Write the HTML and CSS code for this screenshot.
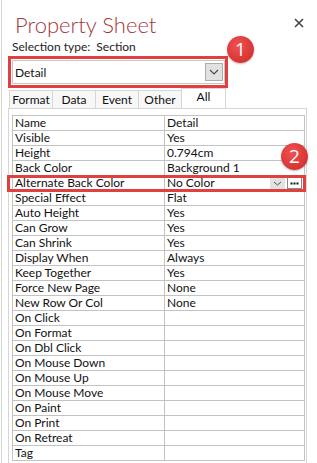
FILE: index.html
```html
<!DOCTYPE html>
<html lang="en">
    <head>
        <meta charset="UTF-8" />
        <title>Property Sheet</title>
        <link rel="stylesheet" href="styles.css">
    </head>
    <body>
        <div class="window">
            <h1 class="title">Property Sheet</h1>
            <svg class="close" width="10" height="10" viewBox="0 0 10 10"><path d="M1 1l8 8M9 1l-8 8" stroke="#444" stroke-width="1.6"/></svg>
            <div class="sel-type">Selection type:&nbsp; Section</div>
            <div class="callout">
                <div class="combo">
                    <span>Detail</span>
                    <span class="combo-btn">
                        <svg width="10" height="6" viewBox="0 0 10 6"><path d="M1 1l4 4 4-4" fill="none" stroke="#444" stroke-width="1.1"/></svg>
                    </span>
                </div>
            </div>
            <div class="tabs">
                <div class="tab">Format</div>
                <div class="tab">Data</div>
                <div class="tab">Event</div>
                <div class="tab">Other</div>
                <div class="tab active">All</div>
            </div>
            <div class="panel">
                <table class="props">
                    <tr><td>Name</td><td>Detail</td></tr>
                    <tr><td>Visible</td><td>Yes</td></tr>
                    <tr><td>Height</td><td>0.794cm</td></tr>
                    <tr><td>Back Color</td><td>Background 1</td></tr>
                    <tr><td>Alternate Back Color</td><td class="picker"><span>No Color</span><span class="mini-drop"><svg width="9" height="5" viewBox="0 0 9 5"><path d="M1 1l3.5 3 3.5-3" fill="none" stroke="#555" stroke-width="1"/></svg></span><span class="mini-build"><svg width="9" height="3" viewBox="0 0 9 3"><path d="M0.5 0.5h2v2h-2zM3.5 0.5h2v2h-2zM6.5 0.5h2v2h-2z" fill="#111"/></svg></span></td></tr>
                    <tr><td>Special Effect</td><td>Flat</td></tr>
                    <tr><td>Auto Height</td><td>Yes</td></tr>
                    <tr><td>Can Grow</td><td>Yes</td></tr>
                    <tr><td>Can Shrink</td><td>Yes</td></tr>
                    <tr><td>Display When</td><td>Always</td></tr>
                    <tr><td>Keep Together</td><td>Yes</td></tr>
                    <tr><td>Force New Page</td><td>None</td></tr>
                    <tr><td>New Row Or Col</td><td>None</td></tr>
                    <tr><td>On Click</td><td></td></tr>
                    <tr><td>On Format</td><td></td></tr>
                    <tr><td>On Dbl Click</td><td></td></tr>
                    <tr><td>On Mouse Down</td><td></td></tr>
                    <tr><td>On Mouse Up</td><td></td></tr>
                    <tr><td>On Mouse Move</td><td></td></tr>
                    <tr><td>On Paint</td><td></td></tr>
                    <tr><td>On Print</td><td></td></tr>
                    <tr><td>On Retreat</td><td></td></tr>
                    <tr><td>Tag</td><td></td></tr>
                </table>
            </div>
        </div>
        <div class="row-callout"></div>
        <div class="badge badge-1">1</div>
        <div class="badge badge-2">2</div>
    </body>
</html>
```

FILE: styles.css
```css
* {
    margin: 0;
    padding: 0;
    box-sizing: border-box;
}

body {
    position: relative;
    width: 317px;
    height: 463px;
    overflow: hidden;
    background: #fff;
    font-family: Lato, "Open Sans", sans-serif;
    font-size: 12px;
    color: #111;
}

.window {
    margin-left: 1px;
    border-left: 1px solid #d6d6d6;
    height: 463px;
    padding-left: 6px;
}

.title {
    padding: 11px 0 0 7px;
    height: 39px;
    font-size: 22px;
    font-weight: 300;
    line-height: 28px;
    color: #a4373a;
}

.close {
    position: absolute;
    top: 18px;
    left: 294px;
}

.sel-type {
    padding-left: 4px;
    height: 16px;
    line-height: 16px;
    color: #222;
}

.callout {
    width: 220px;
    height: 32px;
    margin-top: 1px;
    border: 3px solid #e0403f;
    padding: 1px 0 0 1px;
}

.combo {
    width: 213px;
    height: 24px;
    border: 1px solid #c6c6c6;
    display: flex;
    align-items: center;
    justify-content: space-between;
    padding: 0 1px 0 2px;

    .combo-btn {
        width: 18px;
        height: 18px;
        background: #e1e1e1;
        border: 1px solid #adadad;
        display: grid;
        place-items: center;
    }
}

.tabs {
    display: flex;
    align-items: flex-end;
    margin: 0 0 0 1px;
    height: 20px;

    .tab {
        width: 43px;
        height: 18px;
        border: 1px solid #d6d6d6;
        border-right: none;
        border-bottom: none;
        background: #f7f7f7;
        line-height: 17px;
        text-align: center;
    }

    .active {
        width: 45px;
        height: 20px;
        background: #fff;
        border-right: 1px solid #d6d6d6;
        line-height: 16px;
    }
}

.panel {
    width: 299px;
    height: 355px;
    border: 1px solid #d6d6d6;
    border-bottom: none;
    padding: 6px 0 0 3px;
}

.props {
    width: 293px;
    border-collapse: collapse;
    table-layout: fixed;

    td {
        height: 15px;
        border: 1px solid #c3c3c3;
        padding: 0 0 0 2px;
        line-height: 14px;
        white-space: nowrap;
        overflow: hidden;
    }

    td:first-child {
        width: 152px;
    }

    .picker {
        position: relative;
    }

    .mini-drop {
        position: absolute;
        top: 1px;
        right: 19px;
        width: 15px;
        height: 12px;
        background: #e2e2e2;
        display: grid;
        place-items: center;
    }

    .mini-build {
        position: absolute;
        top: 1px;
        right: 2px;
        width: 15px;
        height: 12px;
        border: 1px solid #8a8a8a;
        display: grid;
        place-items: center;
    }
}

.row-callout {
    position: absolute;
    left: 7px;
    top: 175px;
    width: 299px;
    height: 17px;
    border: 3px solid #e0403f;
}

.badge {
    position: absolute;
    width: 27px;
    height: 27px;
    border-radius: 50%;
    background: radial-gradient(circle at 40% 35%, #ef5252, #d83434 70%, #c42a2a);
    box-shadow: 0 1px 2px rgba(0, 0, 0, 0.25);
    color: #fff;
    font-family: "Open Sans", sans-serif;
    font-size: 19px;
    line-height: 27px;
    text-align: center;
}

.badge-1 {
    left: 227px;
    top: 36px;
}

.badge-2 {
    left: 281px;
    top: 143px;
}
```
